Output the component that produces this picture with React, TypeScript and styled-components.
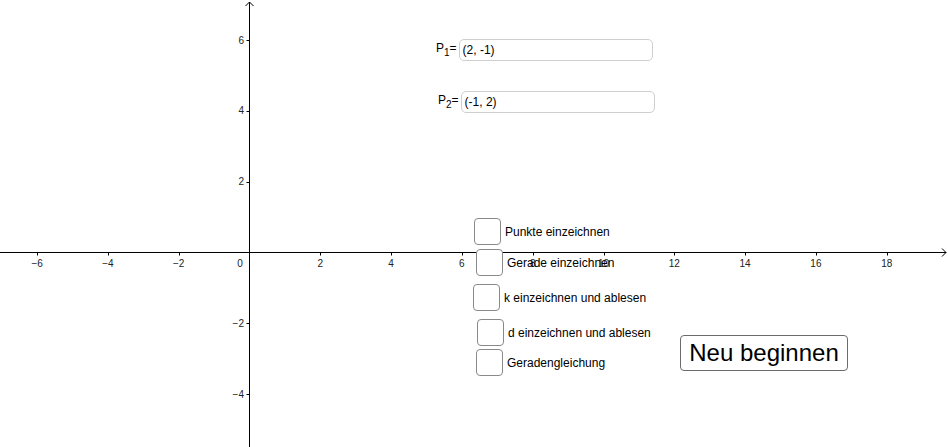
import React from 'react';
import styled, { createGlobalStyle } from 'styled-components';

const GlobalStyle = createGlobalStyle`
  html, body {
    margin: 0;
    padding: 0;
    background: #ffffff;
    font-family: "Liberation Sans", Arial, sans-serif;
    overflow: hidden;
  }
`;

// graph view constants
const W = 948;
const H = 447;
const OX = 249.5;
const OY = 252.5;
const UNIT = 35.4;

const Applet = styled.div`
  position: relative;
  width: ${W}px;
  height: ${H}px;
  background: #fff;
  color: #000;
  overflow: hidden;
`;

const Graph = styled.svg`
  position: absolute;
  inset: 0;
  font-family: "Liberation Sans", Arial, sans-serif;
  font-size: 10px;
`;

const InputRow = styled.div<{ $x: number; $y: number }>`
  position: absolute;
  left: ${(p) => p.$x}px;
  top: ${(p) => p.$y}px;
  display: flex;
  align-items: center;
  gap: 2px;
`;

const InputLabel = styled.span`
  font-size: 12px;
  line-height: 1;
  white-space: nowrap;

  sub {
    font-size: 10px;
    vertical-align: -4px;
  }
`;

const InputField = styled.div<{ $w: number }>`
  box-sizing: border-box;
  width: ${(p) => p.$w}px;
  height: 22px;
  border: 1px solid #cfcfcf;
  border-radius: 5px;
  padding: 0 3px;
  display: flex;
  align-items: center;
  font-size: 12px;
  background: #fff;
`;

const CheckRow = styled.label<{ $x: number; $y: number }>`
  position: absolute;
  left: ${(p) => p.$x}px;
  top: ${(p) => p.$y}px;
  display: flex;
  align-items: center;
  gap: 4px;
  font-size: 12px;
  white-space: nowrap;
  cursor: pointer;
`;

const Box = styled.span<{ $size: number }>`
  box-sizing: border-box;
  width: ${(p) => p.$size}px;
  height: ${(p) => p.$size}px;
  border: 1px solid #8a8a8a;
  border-radius: 4px;
  background: #fff;
`;

const ResetButton = styled.button`
  position: absolute;
  left: 680px;
  top: 335px;
  box-sizing: border-box;
  width: 168px;
  height: 36px;
  border: 1px solid #6b6b6b;
  border-radius: 4px;
  background: #fff;
  font-family: "Liberation Sans", Arial, sans-serif;
  font-size: 24px;
  color: #000;
  padding: 0;
  cursor: pointer;
`;

const minus = (n: number) => (n < 0 ? `\u2212${-n}` : `${n}`);

function Axes() {
  const xs = [-6, -4, -2, 2, 4, 6, 8, 10, 12, 14, 16, 18];
  const ys = [6, 4, 2, -2, -4];
  return (
    <Graph width={W} height={H} viewBox={`0 0 ${W} ${H}`}>
      <g stroke="#000" strokeWidth={1} fill="none">
        <line x1={0} y1={OY} x2={946} y2={OY} />
        <polyline points={`942,${OY - 4} 946,${OY} 942,${OY + 4}`} />
        <line x1={OX} y1={2} x2={OX} y2={H} />
        <polyline points={`${OX - 4},6 ${OX},2 ${OX + 4},6`} />
        {xs.map((n) => {
          const x = Math.round(OX + n * UNIT) + 0.5;
          return <line key={`tx${n}`} x1={x} y1={OY} x2={x} y2={OY + 3} />;
        })}
        {ys.map((n) => {
          const y = Math.round(OY - n * UNIT) + 0.5;
          return <line key={`ty${n}`} x1={OX - 3} y1={y} x2={OX} y2={y} />;
        })}
      </g>
      <g fill="#222">
        {xs.map((n) => (
          <text key={`lx${n}`} x={OX + n * UNIT} y={267} textAnchor="middle">
            {minus(n)}
          </text>
        ))}
        {ys.map((n) => (
          <text key={`ly${n}`} x={244} y={OY - n * UNIT + 3.5} textAnchor="end">
            {minus(n)}
          </text>
        ))}
        <text x={240} y={267} textAnchor="middle">0</text>
      </g>
    </Graph>
  );
}

const checks = [
  { x: 474, y: 218, size: 27, text: 'Punkte einzeichnen' },
  { x: 476, y: 249, size: 27, text: 'Gerade einzeichnen' },
  { x: 473, y: 284, size: 27, text: 'k einzeichnen und ablesen' },
  { x: 477, y: 319, size: 27, text: 'd einzeichnen und ablesen' },
  { x: 476, y: 349, size: 27, text: 'Geradengleichung' },
];

export default function App() {
  return (
    <>
      <GlobalStyle />
      <Applet>
        <Axes />
        <InputRow $x={436} $y={39}>
          <InputLabel>
            P<sub>1</sub>=
          </InputLabel>
          <InputField $w={194}>(2, -1)</InputField>
        </InputRow>
        <InputRow $x={438} $y={91}>
          <InputLabel>
            P<sub>2</sub>=
          </InputLabel>
          <InputField $w={194}>(-1, 2)</InputField>
        </InputRow>
        {checks.map((c) => (
          <CheckRow key={c.text} $x={c.x} $y={c.y}>
            <Box $size={c.size} />
            {c.text}
          </CheckRow>
        ))}
        <ResetButton>Neu beginnen</ResetButton>
      </Applet>
    </>
  );
}
